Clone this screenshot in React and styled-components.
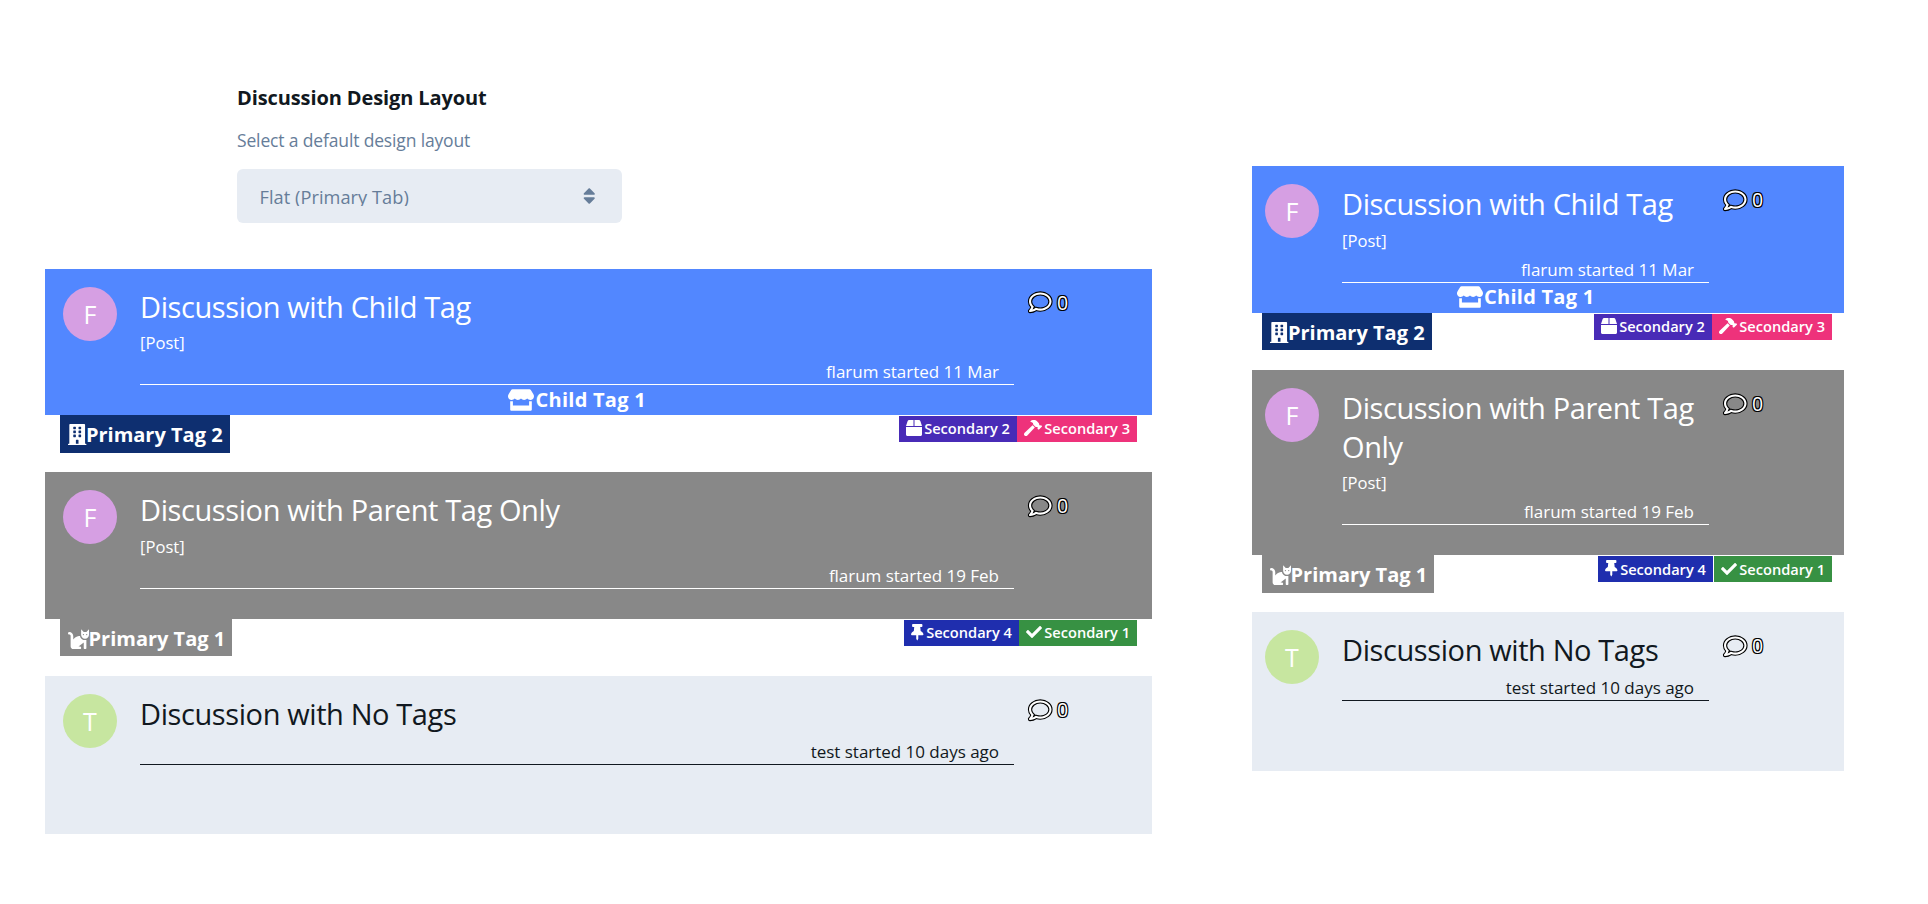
import React from "react";
import styled, { createGlobalStyle } from "styled-components";
import {
  FaBox,
  FaBuilding,
  FaCat,
  FaCheck,
  FaHammer,
  FaRegComment,
  FaSort,
  FaStore,
  FaThumbtack,
} from "react-icons/fa";

const GlobalStyle = createGlobalStyle`
  * { box-sizing: border-box; }
  body {
    margin: 0;
    background: #fff;
    color: #111820;
    font-family: "Open Sans", "Noto Sans", sans-serif;
  }
`;

const Page = styled.main`
  display: flex;
  gap: 100px;
  width: 1928px;
  height: 904px;
  padding-left: 45px;
  overflow: hidden;
`;

const WideColumn = styled.div`
  width: 1107px;
  padding-top: 84px;
`;

const NarrowColumn = styled.div`
  width: 592px;
  padding-top: 166.2px;
`;

const Setting = styled.section`
  display: flex;
  flex-direction: column;
  width: 385px;
  height: 184.6px;
  margin-left: 192px;
`;

const SettingTitle = styled.h2`
  margin: 0;
  font-size: 20px;
  line-height: 28px;
  font-weight: 700;
  letter-spacing: -0.11px;
`;

const SettingHelp = styled.p`
  margin: 15px 0;
  font-size: 17.5px;
  line-height: 27px;
  letter-spacing: -0.15px;
  color: #667d99;
`;

const Select = styled.div`
  display: flex;
  align-items: center;
  justify-content: space-between;
  height: 54px;
  padding: 0 27px 0 22.5px;
  border-radius: 6px;
  background: #e7ecf3;
  color: #667d99;
`;

const SelectValue = styled.span`
  height: 19px;
  overflow: hidden;
  font-size: 18.2px;
  line-height: 21px;
  letter-spacing: 0.05px;
`;

const List = styled.div`
  display: flex;
  flex-direction: column;
  gap: 57px;
`;

const Discussion = styled.article`
  display: flex;
  flex-direction: column;
  height: ${(p) => p.$height}px;
`;

const Body = styled.div`
  display: flex;
  flex: 0 0 100%;
  padding-top: 18px;
  padding-left: ${(p) => (p.$compact ? 13 : 18)}px;
  background: ${(p) => p.$bg};
  color: ${(p) => p.$color};
`;

const Avatar = styled.div`
  flex: none;
  width: 54px;
  height: 54px;
  margin-right: 23px;
  border-radius: 50%;
  background: ${(p) => p.$bg};
  color: #fff;
  font-size: 25px;
  line-height: 55px;
  text-align: center;
`;

const Info = styled.div`
  width: ${(p) => (p.$compact ? 367 : 874)}px;
`;

const Title = styled.h3`
  margin: 0;
  font-size: 29px;
  line-height: 39px;
  font-weight: 400;
  letter-spacing: -0.4px;
`;

const Excerpt = styled.div`
  height: 27.6px;
  padding-top: 6.6px;
  font-size: 16.6px;
  line-height: 22.6px;
`;

const Meta = styled.div`
  padding: 7px 15px 0 0;
  border-bottom: 1px solid currentColor;
  font-size: 17px;
  line-height: 24px;
  letter-spacing: -0.02px;
  text-align: right;
`;

const ChildTag = styled.div`
  display: flex;
  align-items: center;
  justify-content: center;
  gap: 1.5px;
  height: 29px;
  font-size: 20px;
  line-height: 28px;
  font-weight: 700;
  letter-spacing: 0.25px;
`;

const Replies = styled.div`
  display: flex;
  align-items: center;
  gap: 6px;
  height: 24px;
  margin: 4px 0 0 14.5px;
  color: #fff;
  font-size: 19.5px;
  line-height: 24px;
  text-shadow: -1px -1px 0 #000, 1px -1px 0 #000, -1px 1px 0 #000, 1px 1px 0 #000;

  path {
    stroke: #000;
    stroke-width: 50px;
    paint-order: stroke;
  }
`;

const TagRow = styled.div`
  display: flex;
  flex: none;
  align-items: flex-start;
  justify-content: space-between;
  padding: 0 ${(p) => (p.$compact ? 12 : 15)}px 0 ${(p) => (p.$compact ? 10 : 15)}px;
`;

const PrimaryTag = styled.div`
  display: flex;
  align-items: center;
  height: 37.6px;
  padding: 1px 7.2px 0 7.5px;
  background: ${(p) => p.$bg};
  color: #fff;
  font-size: 20px;
  font-weight: 700;
`;

const SecondaryTags = styled.div`
  display: flex;
  gap: ${(p) => p.$gap || 0}px;
  padding-top: 1px;
`;

const SecondaryTag = styled.div`
  display: flex;
  align-items: center;
  gap: 2.5px;
  height: 26px;
  padding: 0 7px 1.4px;
  background: ${(p) => p.$bg};
  color: #fff;
  font-size: 14.6px;
  font-weight: 600;
`;

const IconBox = styled.span`
  display: block;
  flex: none;
  width: ${(p) => p.$width}px;
  height: ${(p) => p.$height}px;

  svg {
    display: block;
    width: 100%;
    height: 100%;
    overflow: visible;
  }
`;

const ICONS = {
  building: [FaBuilding, 18.4, 21],
  cat: [FaCat, 21, 21],
  store: [FaStore, 26, 22],
  box: [FaBox, 16, 16],
  hammer: [FaHammer, 18, 16],
  pin: [FaThumbtack, 12.5, 16.5],
  check: [FaCheck, 16, 16],
  comment: [FaRegComment, 22.5, 22.5],
  sort: [FaSort, 12.5, 20],
};

function Icon({ name }) {
  const [Glyph, width, height] = ICONS[name];
  return (
    <IconBox $width={width} $height={height}>
      <Glyph />
    </IconBox>
  );
}

const threads = [
  {
    title: "Discussion with Child Tag",
    letter: "F",
    avatar: "#d69fe3",
    excerpt: "[Post]",
    meta: "flarum started 11 Mar",
    child: "Child Tag 1",
    bg: "#5287ff",
    color: "#fff",
    height: 146.6,
    primary: { label: "Primary Tag 2", icon: "building", bg: "#0e2f70" },
    secondary: [
      { label: "Secondary 2", icon: "box", bg: "#482bb7" },
      { label: "Secondary 3", icon: "hammer", bg: "#ee327b" },
    ],
  },
  {
    title: "Discussion with Parent Tag Only",
    letter: "F",
    avatar: "#d69fe3",
    excerpt: "[Post]",
    meta: "flarum started 19 Feb",
    bg: "#888",
    color: "#fff",
    height: 146.6,
    compactHeight: 185.6,
    compactGap: 1,
    primary: { label: "Primary Tag 1", icon: "cat", bg: "#888" },
    secondary: [
      { label: "Secondary 4", icon: "pin", bg: "#1f2eae" },
      { label: "Secondary 1", icon: "check", bg: "#379143" },
    ],
  },
  {
    title: "Discussion with No Tags",
    letter: "T",
    avatar: "#c7e6a0",
    meta: "test started 10 days ago",
    bg: "#e7ecf3",
    color: "#111820",
    height: 158.4,
  },
];

function Thread({ thread, compact }) {
  return (
    <Discussion $height={(compact && thread.compactHeight) || thread.height}>
      <Body $bg={thread.bg} $color={thread.color} $compact={compact}>
        <Avatar $bg={thread.avatar}>{thread.letter}</Avatar>
        <Info $compact={compact}>
          <Title>{thread.title}</Title>
          {thread.excerpt && <Excerpt>{thread.excerpt}</Excerpt>}
          <Meta>{thread.meta}</Meta>
          {thread.child && (
            <ChildTag>
              <Icon name="store" />
              {thread.child}
            </ChildTag>
          )}
        </Info>
        <Replies>
          <Icon name="comment" />
          <span>0</span>
        </Replies>
      </Body>
      {thread.primary && (
        <TagRow $compact={compact}>
          <PrimaryTag $bg={thread.primary.bg}>
            <Icon name={thread.primary.icon} />
            {thread.primary.label}
          </PrimaryTag>
          <SecondaryTags $gap={compact ? thread.compactGap : 0}>
            {thread.secondary.map((tag) => (
              <SecondaryTag key={tag.label} $bg={tag.bg}>
                <Icon name={tag.icon} />
                {tag.label}
              </SecondaryTag>
            ))}
          </SecondaryTags>
        </TagRow>
      )}
    </Discussion>
  );
}

export default function App() {
  return (
    <>
      <GlobalStyle />
      <Page>
        <WideColumn>
          <Setting>
            <SettingTitle>Discussion Design Layout</SettingTitle>
            <SettingHelp>Select a default design layout</SettingHelp>
            <Select>
              <SelectValue>Flat (Primary Tab)</SelectValue>
              <Icon name="sort" />
            </Select>
          </Setting>
          <List>
            {threads.map((t) => (
              <Thread key={t.title} thread={t} />
            ))}
          </List>
        </WideColumn>
        <NarrowColumn>
          <List>
            {threads.map((t) => (
              <Thread key={t.title} thread={t} compact />
            ))}
          </List>
        </NarrowColumn>
      </Page>
    </>
  );
}
